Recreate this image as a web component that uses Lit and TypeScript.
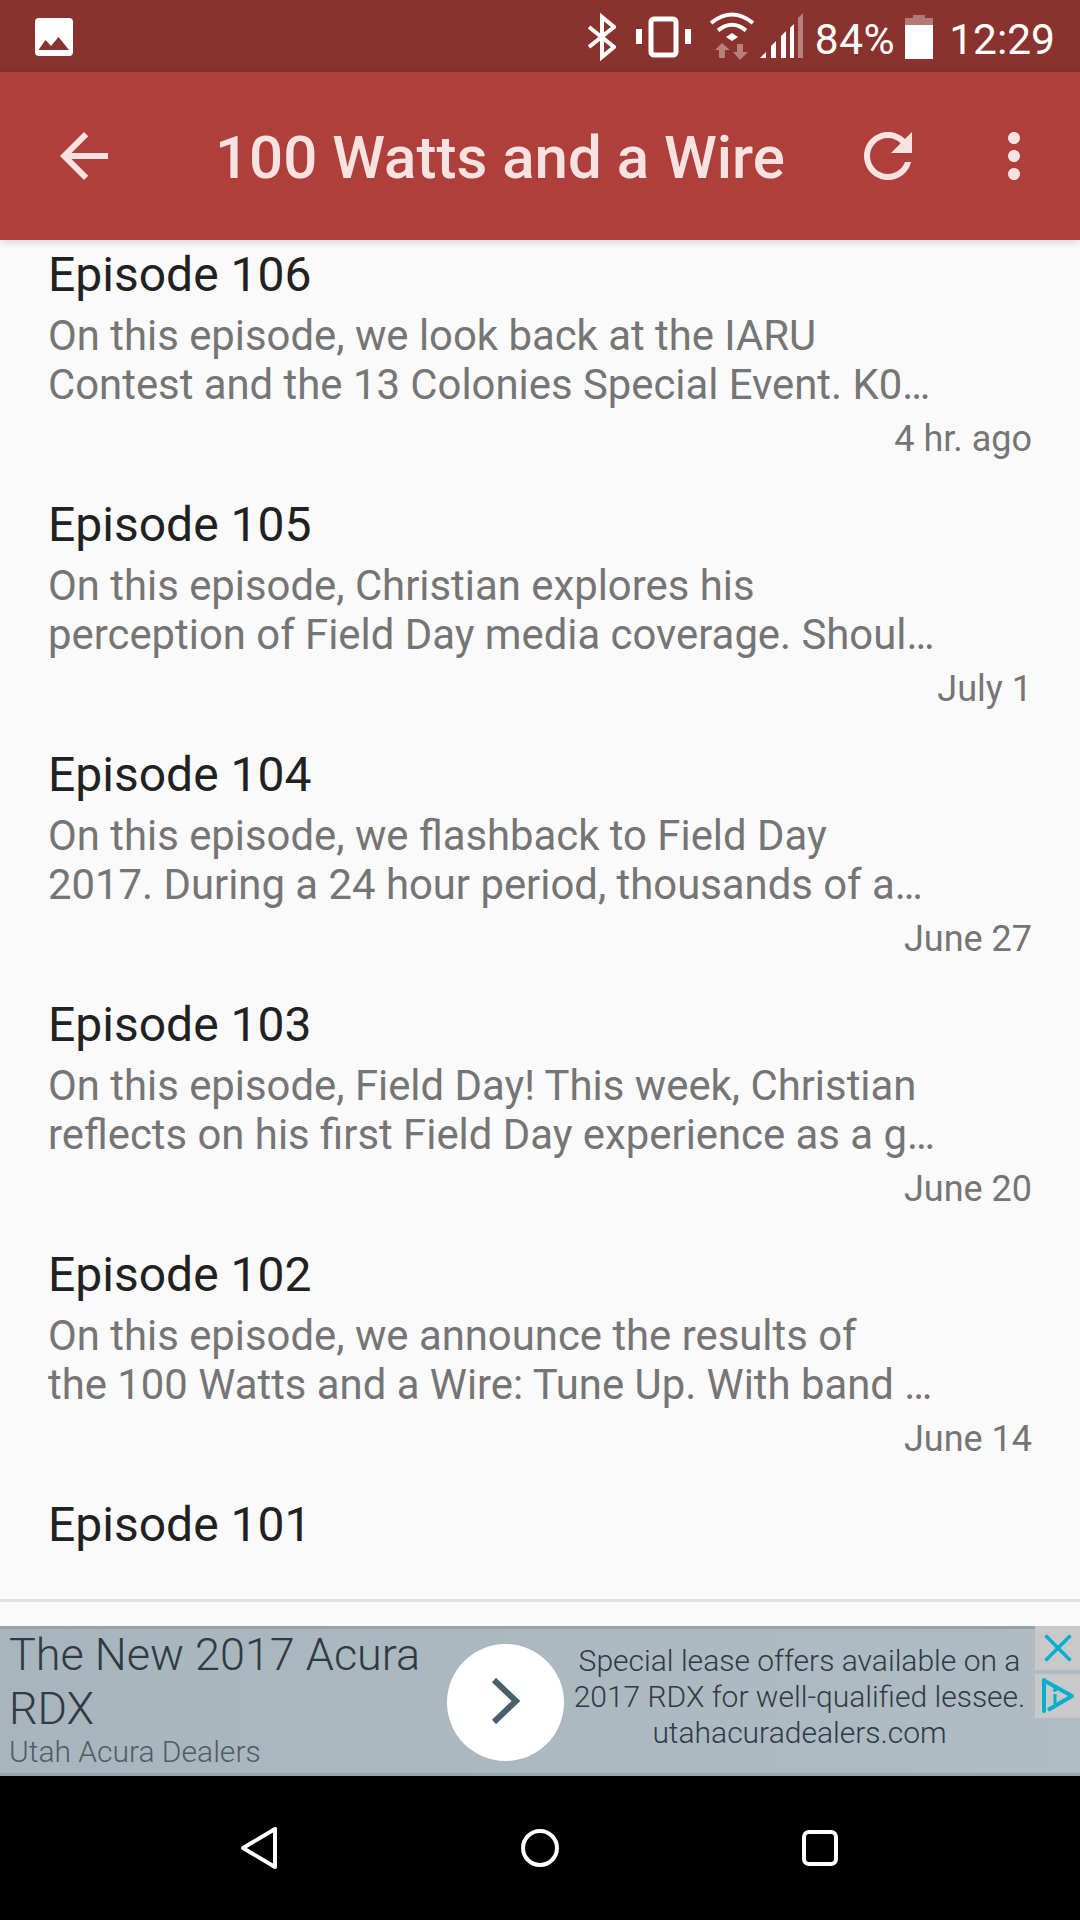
import { LitElement, html, css } from "lit";
import { customElement } from "lit/decorators.js";

interface Episode { title: string; lines: string[]; time: string; }

const EPISODES: Episode[] = [
  { title: "Episode 106", lines: ["On this episode, we look back at the IARU", "Contest and the 13 Colonies Special Event. K0…"], time: "4 hr. ago" },
  { title: "Episode 105", lines: ["On this episode, Christian explores his", "perception of Field Day media coverage. Shoul…"], time: "July 1" },
  { title: "Episode 104", lines: ["On this episode, we flashback to Field Day", "2017. During a 24 hour period, thousands of a…"], time: "June 27" },
  { title: "Episode 103", lines: ["On this episode, Field Day! This week, Christian", "reflects on his first Field Day experience as a g…"], time: "June 20" },
  { title: "Episode 102", lines: ["On this episode, we announce the results of", "the 100 Watts and a Wire: Tune Up. With band …"], time: "June 14" },
  { title: "Episode 101", lines: [], time: "" },
];

@customElement("app-root")
export class AppRoot extends LitElement {
  static styles = css`
    :host { display: block; width: 1080px; height: 1920px; font-family: Roboto, "Liberation Sans", sans-serif; background: #fafafa; overflow: hidden; }
    .page { display: flex; flex-direction: column; height: 1920px; }
    svg { display: block; flex: none; }

    .status { height: 72px; flex: none; background: #8a322d; color: #fff; display: flex; align-items: flex-start; padding: 0 25px 0 35px; }
    .status .grow { flex: 1; }
    .status-text { font-size: 42.5px; line-height: 49px; padding-top: 15px; white-space: nowrap; }
    .pct { margin-left: 12px; letter-spacing: .5px; }
    .time { margin-left: 16px; }
    .s-vib { margin-left: 20px; }
    .s-wifi { margin-left: 19px; }
    .s-sig { margin-left: 6px; }
    .s-bat { margin-left: 10px; }

    .toolbar { height: 168px; flex: none; background: #ae3f3a; color: #f6e2e1; display: flex; align-items: center; padding: 0 30px 0 48px; position: relative; z-index: 1; box-shadow: 0 2px 8px rgba(0,0,0,.16); }
    .toolbar svg { fill: #f6e2e1; }
    .title { font-size: 60px; font-weight: 500; margin-left: 95px; flex: 1; white-space: nowrap; line-height: 70px; padding-top: 4px; }
    .dots { margin-left: 54px; }

    .list { height: 1329px; flex: none; overflow: hidden; padding-top: 7px; box-sizing: border-box; }
    .row { padding: 0 48px 37px 48px; display: flex; flex-direction: column; }
    .ep { font-size: 48px; line-height: 56px; color: #212121; }
    .desc { margin-top: 8px; font-size: 41.85px; line-height: 49px; color: #757575; white-space: nowrap; }
    .when { margin-top: 9px; font-size: 36px; line-height: 42px; color: #757575; text-align: right; }

    .gap1 { height: 30px; flex: none; }
    .divider { height: 3px; flex: none; background: #e0e0e0; }
    .gap2 { height: 24px; flex: none; }

    .ad { height: 150px; flex: none; display: flex; background: linear-gradient(90deg, #a8b5bc, #afbcc4); color: #2f3a42; font-weight: 300; box-sizing: border-box; border-top: 3px solid #93a5a7; border-bottom: 3px solid #99a6ad; }
    .ad-left { width: 438px; flex: none; padding-left: 9px; box-sizing: content-box; margin-top: -1px; }
    .ad-head { font-size: 45px; line-height: 54px; }
    .ad-sub { font-size: 30px; line-height: 32px; color: #4f5d66; }
    .circle { width: 117px; height: 117px; flex: none; border-radius: 50%; background: #fff; margin-top: 15px; display: flex; align-items: center; justify-content: center; }
    .chev { margin-bottom: 3px; }
    .ad-right { flex: 1; text-align: center; font-size: 30px; line-height: 36px; padding-top: 14px; white-space: nowrap; }
    .ad-side { width: 45px; flex: none; display: flex; flex-direction: column; margin-top: -3px; gap: 4px; }
    .ad-btn { height: 44px; flex: none; background: #c9c9c9; display: flex; align-items: center; justify-content: center; }

    .nav { flex: 1; background: #000; display: flex; align-items: center; justify-content: center; padding-right: 2px; }
    .nav svg { fill: none; stroke: #fff; stroke-width: 4px; stroke-linejoin: round; }
    .nav-back { margin-right: 243px; }
    .nav-home { margin-right: 242px; }
  `;

  private statusBar() {
    return html`<div class="status">
      <svg width="38" height="72" viewBox="0 0 38 72">
        <rect x="0" y="18" width="38" height="38" rx="4" fill="#fff"></rect>
        <path d="M3.5 50 10.5 40 16 46 23.5 37 34 50Z" fill="#8a322d"></path>
      </svg>
      <div class="grow"></div>
      <svg width="28" height="72" viewBox="0 0 28 72" fill="none" stroke="#fff" stroke-width="4">
        <path d="M1 27 26 47 14 57V17L26 27 1 47"></path>
      </svg>
      <svg class="s-vib" width="55" height="72" viewBox="0 0 55 72" fill="#fff">
        <rect x="15" y="19" width="25" height="36" rx="3" fill="none" stroke="#fff" stroke-width="5"></rect>
        <rect x="0" y="29" width="6" height="15"></rect>
        <rect x="49" y="29" width="6" height="15"></rect>
      </svg>
      <svg class="s-wifi" width="44" height="72" viewBox="0 0 44 72" fill="#fff">
        <path d="M1 23Q22 6 43 23M8 30.5Q22 19 36 30.5" fill="none" stroke="#fff" stroke-width="4"></path>
        <path d="M16 37 22 33 28 37 22 41Z"></path>
        <path opacity=".38" d="M12 43 5 50H9V58H15V50H20ZM27 44H33V52H38L30 60 23 52H27Z"></path>
      </svg>
      <svg class="s-sig" width="43" height="72" viewBox="0 0 43 72" fill="#fff">
        <path d="M0 58 6 52V58ZM11 58V46L16 41V58ZM21 58V36L26 31V58ZM30 58V28L34 24V58Z"></path>
        <path opacity=".38" d="M38 58V18L43 13V58Z"></path>
      </svg>
      <div class="status-text pct">84%</div>
      <svg class="s-bat" width="28" height="72" viewBox="0 0 28 72" fill="#fff">
        <path opacity=".35" d="M8 15H20V18H28V25H0V18H8Z"></path>
        <rect x="0" y="25" width="28" height="34"></rect>
      </svg>
      <div class="status-text time">12:29</div>
    </div>`;
  }

  private toolbar() {
    return html`<div class="toolbar">
      <svg width="72" height="72" viewBox="0 0 24 24"><path d="M20 11H7.83l5.59-5.59L12 4l-8 8 8 8 1.41-1.41L7.83 13H20v-2z"></path></svg>
      <div class="title">100 Watts and a Wire</div>
      <svg width="72" height="72" viewBox="0 0 24 24"><path d="M17.65 6.35C16.2 4.9 14.21 4 12 4c-4.42 0-7.99 3.58-7.99 8s3.57 8 7.99 8c3.73 0 6.84-2.55 7.73-6h-2.08c-.82 2.33-3.04 4-5.65 4-3.31 0-6-2.69-6-6s2.69-6 6-6c1.66 0 3.14.69 4.22 1.78L13 11h7V4l-2.35 2.35z"></path></svg>
      <svg class="dots" width="72" height="72" viewBox="0 0 24 24"><path d="M12 8c1.1 0 2-.9 2-2s-.9-2-2-2-2 .9-2 2 .9 2 2 2zm0 2c-1.1 0-2 .9-2 2s.9 2 2 2 2-.9 2-2-.9-2-2-2zm0 6c-1.1 0-2 .9-2 2s.9 2 2 2 2-.9 2-2-.9-2-2-2z"></path></svg>
    </div>`;
  }

  private ad() {
    return html`<div class="ad">
      <div class="ad-left">
        <div class="ad-head">The New 2017 Acura<br />RDX</div>
        <div class="ad-sub">Utah Acura Dealers</div>
      </div>
      <div class="circle">
        <svg class="chev" width="30" height="46" viewBox="0 0 30 46" fill="none" stroke="#47606c" stroke-width="6"><path d="M3 2 25 23 3 44"></path></svg>
      </div>
      <div class="ad-right">Special lease offers available on a<br />2017 RDX for well-qualified lessee.<br />utahacuradealers.com</div>
      <div class="ad-side">
        <div class="ad-btn">
          <svg width="28" height="28" viewBox="0 0 28 28" fill="none" stroke="#00aecd" stroke-width="3.5"><path d="M1.5 1.5 26.5 26.5M26.5 1.5 1.5 26.5"></path></svg>
        </div>
        <div class="ad-btn">
          <svg width="34" height="36" viewBox="0 0 34 36">
            <path d="M4 3 31 18 7 32" fill="none" stroke="#00aecd" stroke-width="4" stroke-linejoin="round"></path>
            <path d="M3 2V33" fill="none" stroke="#00aecd" stroke-width="4" stroke-linecap="round"></path>
            <circle cx="14" cy="12" r="2" fill="#00aecd"></circle>
            <path d="M14 16V26" stroke="#00aecd" stroke-width="3"></path>
          </svg>
        </div>
      </div>
    </div>`;
  }

  render() {
    return html`<div class="page">
      ${this.statusBar()}
      ${this.toolbar()}
      <div class="list">
        ${EPISODES.map(e => html`<div class="row">
          <div class="ep">${e.title}</div>
          ${e.lines.length ? html`<div class="desc">${e.lines.map(l => html`<div>${l}</div>`)}</div>
          <div class="when">${e.time}</div>` : ""}
        </div>`)}
      </div>
      <div class="gap1"></div>
      <div class="divider"></div>
      <div class="gap2"></div>
      ${this.ad()}
      <div class="nav">
        <svg class="nav-back" width="38" height="42" viewBox="0 0 38 42"><path d="M35 2V40L3 21Z"></path></svg>
        <svg class="nav-home" width="38" height="38" viewBox="0 0 38 38"><circle cx="19" cy="19" r="17"></circle></svg>
        <svg width="38" height="38" viewBox="0 0 38 38"><rect x="3" y="3" width="32" height="32" rx="5"></rect></svg>
      </div>
    </div>`;
  }
}
